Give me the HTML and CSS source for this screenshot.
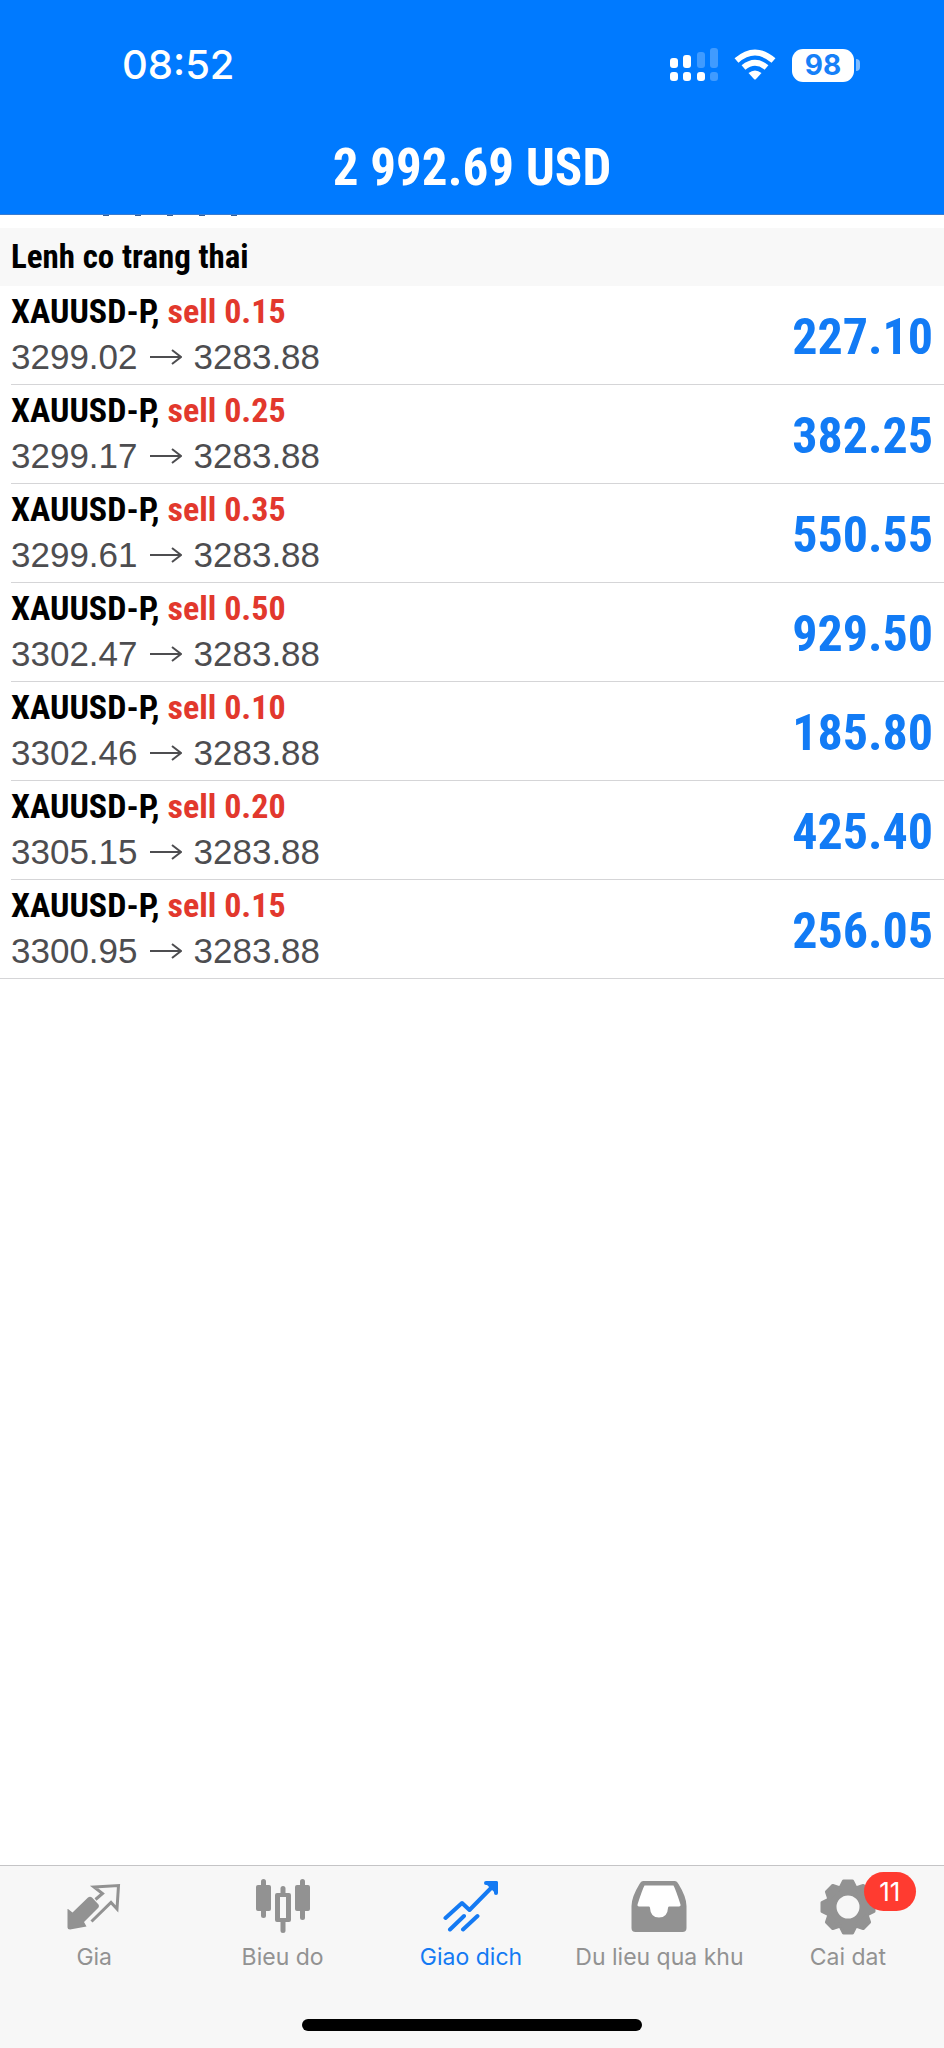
FILE: index.html
```html
<!DOCTYPE html>
<html lang="vi">
<head>
<meta charset="utf-8">
<meta name="viewport" content="width=device-width, initial-scale=1">
<title>Giao dich</title>
<link rel="stylesheet" href="styles.css">
</head>
<body>
<div class="app">
  <header class="top">
    <div class="status">
      <time class="clock">08:52</time>
      <div class="status-icons">
        <svg class="signal" width="48" height="34" viewBox="0 0 48 34" fill="#fff" aria-label="Signal">
          <rect x="0" y="10" width="8" height="10" rx="3"/><rect x="13" y="7" width="8" height="13" rx="3"/>
          <rect x="27" y="4" width="8" height="16" rx="3" opacity=".25"/><rect x="40" y="0" width="8" height="20" rx="3" opacity=".25"/>
          <rect x="0" y="24" width="8" height="9" rx="3"/><rect x="13" y="24" width="8" height="9" rx="3"/><rect x="27" y="24" width="8" height="9" rx="3"/><rect x="40" y="24" width="8" height="9" rx="3" opacity=".25"/>
        </svg>
        <svg class="wifi" width="44" height="32" viewBox="0 0 44 32" aria-label="Wi-Fi">
          <path d="M3.500 11.500Q22-4.500 40.500 11.500" fill="none" stroke="#fff" stroke-width="6"/>
          <path d="M10.500 18.500Q22 9 33.500 18.500" fill="none" stroke="#fff" stroke-width="6"/>
          <path d="M15.500 24Q22 19 28.500 24L22.800 30.200Q22 31 21.200 30.200Z" fill="#fff"/>
        </svg>
        <div class="battery"><span class="battery-level">98</span><span class="battery-cap"></span></div>
      </div>
    </div>
    <h1 class="balance">2 992.69 USD</h1>
  </header>

  <main class="content">
    <div class="scrolled-edge"><i></i><i></i><i></i><i></i><i></i></div>
    <h2 class="section">Lenh co trang thai</h2>
    <ul class="positions">
      <li class="position"><div><p class="symbol">XAUUSD-P, <span>sell 0.15</span></p><p class="prices">3299.02 <svg class="arrow" viewBox="0 0 32 16"><path d="M0 8H30M22 1L31 8L22 15"/></svg> 3283.88</p></div><strong class="profit">227.10</strong></li>
      <li class="position"><div><p class="symbol">XAUUSD-P, <span>sell 0.25</span></p><p class="prices">3299.17 <svg class="arrow" viewBox="0 0 32 16"><path d="M0 8H30M22 1L31 8L22 15"/></svg> 3283.88</p></div><strong class="profit">382.25</strong></li>
      <li class="position"><div><p class="symbol">XAUUSD-P, <span>sell 0.35</span></p><p class="prices">3299.61 <svg class="arrow" viewBox="0 0 32 16"><path d="M0 8H30M22 1L31 8L22 15"/></svg> 3283.88</p></div><strong class="profit">550.55</strong></li>
      <li class="position"><div><p class="symbol">XAUUSD-P, <span>sell 0.50</span></p><p class="prices">3302.47 <svg class="arrow" viewBox="0 0 32 16"><path d="M0 8H30M22 1L31 8L22 15"/></svg> 3283.88</p></div><strong class="profit">929.50</strong></li>
      <li class="position"><div><p class="symbol">XAUUSD-P, <span>sell 0.10</span></p><p class="prices">3302.46 <svg class="arrow" viewBox="0 0 32 16"><path d="M0 8H30M22 1L31 8L22 15"/></svg> 3283.88</p></div><strong class="profit">185.80</strong></li>
      <li class="position"><div><p class="symbol">XAUUSD-P, <span>sell 0.20</span></p><p class="prices">3305.15 <svg class="arrow" viewBox="0 0 32 16"><path d="M0 8H30M22 1L31 8L22 15"/></svg> 3283.88</p></div><strong class="profit">425.40</strong></li>
      <li class="position"><div><p class="symbol">XAUUSD-P, <span>sell 0.15</span></p><p class="prices">3300.95 <svg class="arrow" viewBox="0 0 32 16"><path d="M0 8H30M22 1L31 8L22 15"/></svg> 3283.88</p></div><strong class="profit">256.05</strong></li>
    </ul>
  </main>

  <footer class="bottom">
    <nav class="tabs">
      <button class="tab" type="button">
        <svg class="icon" viewBox="0 0 56 56"><path fill="currentColor" d="M2 30L6.500 33.500L22 18.500Q24 17 26 18.500L32.500 25.500Q33.500 27 32.500 28.500L18 43L20.500 47.500L4 50.500Q1.500 50.500 1.500 48.500V30Z"/><path fill="none" stroke="currentColor" stroke-width="3" d="M29.500 20.500L36.500 14.500L28 8L52.500 6.500L51 30L45 23.500L25.500 42.500"/></svg>
        <span>Gia</span>
      </button>
      <button class="tab" type="button">
        <svg class="icon" viewBox="0 0 56 56" fill="currentColor"><rect x="6" y="0" width="5" height="39" rx="2.500"/><rect x="1" y="6" width="15" height="26" rx="2"/><rect x="45" y="0" width="5" height="41" rx="2.500"/><rect x="40" y="6" width="15" height="26" rx="2"/><rect x="25.500" y="7" width="5" height="10" rx="2.500"/><rect x="25.500" y="41" width="5" height="13" rx="2.500"/><path fill-rule="evenodd" d="M22 14H34Q36 14 36 16V41Q36 43 34 43H22Q20 43 20 41V16Q20 14 22 14ZM25 18V39H31V18Z"/></svg>
        <span>Bieu do</span>
      </button>
      <button class="tab active" type="button" aria-current="page">
        <svg class="icon" viewBox="0 0 56 56" fill="none" stroke="currentColor" stroke-width="4" stroke-linecap="round" stroke-linejoin="round"><path d="M2.500 39L19 24L26.500 31L52 5M43 4H53V14M7 50.500L21 37M20 50.500L34.500 37"/><path fill="currentColor" d="M45 4H53V12Z"/></svg>
        <span>Giao dich</span>
      </button>
      <button class="tab" type="button">
        <svg class="icon" viewBox="0 0 56 56"><path fill="currentColor" d="M12 2H44Q46 2 47.500 5Q55.500 18 55.500 27V49Q55.500 53 51.500 53H4.500Q.5 53 .5 49V27Q.5 18 8.500 5Q10 2 12 2Z"/><path fill="#fff" d="M13.500 6.500H42.500Q44.500 10 49.500 25.500Q50 27.500 48 27.500H38Q37 27.500 37 29Q36.500 38.500 28 38.500T19 29Q19 27.500 18 27.500H8Q6 27.500 6.500 25.500Q11.500 10 13.500 6.500Z"/></svg>
        <span>Du lieu qua khu</span>
      </button>
      <button class="tab" type="button">
        <span class="icon-wrap"><svg class="icon" viewBox="-28 -28 56 56" fill="currentColor" stroke="currentColor" stroke-width="3" stroke-linejoin="round">
          <defs><path id="tooth" d="M-8-19L-4.500-26H4.500L8-19Z"/></defs>
          <circle r="17" fill="none" stroke-width="11"/>
          <use href="#tooth"/><use href="#tooth" transform="rotate(45)"/><use href="#tooth" transform="rotate(90)"/><use href="#tooth" transform="rotate(135)"/><use href="#tooth" transform="rotate(180)"/><use href="#tooth" transform="rotate(225)"/><use href="#tooth" transform="rotate(270)"/><use href="#tooth" transform="rotate(315)"/>
        </svg><span class="badge">11</span></span>
        <span>Cai dat</span>
      </button>
    </nav>
    <div class="home-bar"></div>
  </footer>
</div>
</body>
</html>
```
FILE: styles.css
```css
:root { --condensed: "Roboto Condensed", "Liberation Sans Narrow", "Liberation Sans", Arial, sans-serif; }
* { box-sizing: border-box; }
body, h1, h2, p, ul { margin: 0; padding: 0; }
body { background: #fff; font-family: "Liberation Sans", Arial, sans-serif; }
.app { min-height: 100vh; display: flex; flex-direction: column; }

.top { background: #007aff; color: #fff; border-bottom: 1px solid #3a7cd0; }
.status { display: flex; justify-content: space-between; align-items: center; height: 128px; padding: 2px 84px 0 122px; }
.clock { font-family: Inter, sans-serif; font-weight: 500; font-size: 40px; line-height: 48px; }
.status-icons { display: flex; align-items: center; gap: 15px; }
.battery { display: flex; align-items: center; gap: 2px; }
.battery-level { width: 62px; height: 33px; border-radius: 11px; background: #fff; color: #1680f8; font: 700 28px/33px Inter, sans-serif; text-align: center; }
.battery-cap { width: 4px; height: 12px; border-radius: 0 6px 6px 0; background: #7fbcff; }
.balance { height: 86px; font: 700 51px/80px var(--condensed); text-align: center; }

.content { flex: 1; }
.scrolled-edge { display: flex; gap: 26px; height: 13px; padding-left: 103px; }
.scrolled-edge i { width: 6px; height: 1px; background: #315f9c; }
.section { background: #f8f8f8; color: #000; padding: 0 11px; font: 700 33px/58px var(--condensed); }
.positions { list-style: none; border-bottom: 1px solid #d5d5d7; }
.position { display: flex; align-items: center; justify-content: space-between; height: 99px; margin-left: 11px; padding: 0 11px 2px 0; border-bottom: 1px solid #d5d5d7; }
.position:last-child { height: 98px; border-bottom: 0; }
.symbol { color: #000; font: 700 34px/46px var(--condensed); }
.symbol span { color: #e2382d; }
.prices { display: flex; align-items: center; gap: 12px; color: #4d4d50; font-size: 35px; line-height: 46px; }
.arrow { width: 32px; height: 16px; fill: none; stroke: currentColor; stroke-width: 2; }
.profit { padding-top: 6px; color: #127bf5; font: 700 50px/64px var(--condensed); }

.bottom { background: #f7f7f7; border-top: 1px solid #c4c4c6; }
.tabs { display: flex; height: 153px; padding: 13px 2px 0 0; }
.tab { flex: 1 1 0; min-width: 0; display: flex; flex-direction: column; align-items: center; gap: 8px; margin: 0; padding: 0; border: 0; background: none; color: #929292; font: 400 23px/28px Inter, sans-serif; white-space: nowrap; }
.tab.active { color: #147af3; }
.icon { display: block; width: 56px; height: 56px; }
.icon-wrap { position: relative; }
.badge { position: absolute; left: 44px; top: -7px; width: 52px; height: 39px; border-radius: 20px; background: #ff3b30; color: #fff; font-size: 26px; line-height: 39px; text-align: center; }
.home-bar { width: 36%; height: 12px; margin: 0 auto 17px; border-radius: 6px; background: #000; }
```
